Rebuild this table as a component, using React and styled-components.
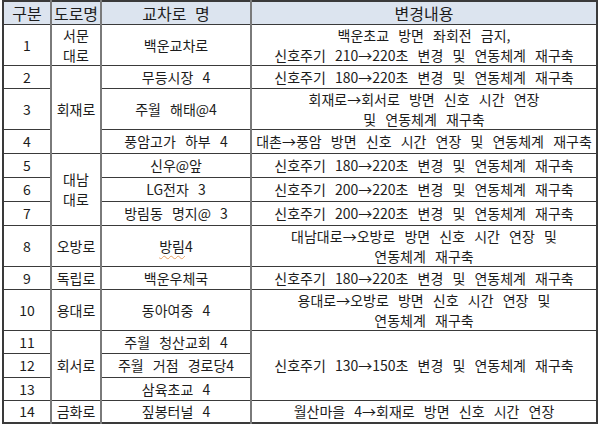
import React from "react";
import styled, { createGlobalStyle } from "styled-components";

const Global = createGlobalStyle`
  html, body { margin: 0; padding: 0; background: #ffffff; }
  body { font-family: "Noto Sans CJK KR", "Noto Sans", sans-serif; color: #1c1c1c; }
`;

const Page = styled.div`
  padding: 0 0 0 2px;
`;

const Table = styled.table`
  width: 596px;
  table-layout: fixed;
  border-collapse: collapse;
  border: 2px solid #3a3a3a;
  font-size: 14px;
  line-height: 20px;
`;

const Head = styled.th`
  background: #dce4ef;
  font-weight: 400;
  font-size: 16px;
  line-height: 20px;
  padding: 0;
  text-align: center;
  border-bottom: 1px solid #3a3a3a;
  border-right: ${(p) => (p.$last ? "2px solid #3a3a3a" : "2px solid #7a7a7a")};
  word-spacing: 5px;
`;

const Row = styled.tr`
  height: ${(p) => p.$h}px;
`;

const Cell = styled.td`
  padding: 0;
  text-align: center;
  vertical-align: middle;
  border-bottom: 1px solid #3a3a3a;
  border-right: ${(p) => (p.$last ? "2px solid #3a3a3a" : "2px solid #7a7a7a")};
  word-spacing: 6px;
  white-space: nowrap;
`;

const Typo = styled.span`
  text-decoration: underline wavy #e8a060;
  text-decoration-thickness: 1px;
  text-underline-offset: 3px;
`;

const rows = [
  { n: "1", h: 38, road: { t: ["서문", "대로"], span: 1 }, x: "백운교차로", c: { t: ["백운초교 방면 좌회전 금지,", "신호주기 210→220초 변경 및 연동체계 재구축"], span: 1 } },
  { n: "2", h: 23, road: { t: ["회재로"], span: 3 }, x: "무등시장 4", c: { t: ["신호주기 180→220초 변경 및 연동체계 재구축"], span: 1 } },
  { n: "3", h: 36, x: "주월 해태@4", c: { t: ["회재로→회서로 방면 신호 시간 연장", "및 연동체계 재구축"], span: 1 } },
  { n: "4", h: 24, x: "풍암고가 하부 4", c: { t: ["대촌→풍암 방면 신호 시간 연장 및 연동체계 재구축"], span: 1 } },
  { n: "5", h: 24, road: { t: ["대남", "대로"], span: 3 }, x: "신우@앞", c: { t: ["신호주기 180→220초 변경 및 연동체계 재구축"], span: 1 } },
  { n: "6", h: 24, x: "LG전자 3", c: { t: ["신호주기 200→220초 변경 및 연동체계 재구축"], span: 1 } },
  { n: "7", h: 24, x: "방림동 명지@ 3", c: { t: ["신호주기 200→220초 변경 및 연동체계 재구축"], span: 1 } },
  { n: "8", h: 37, road: { t: ["오방로"], span: 1 }, x: "방림4", typo: true, c: { t: ["대남대로→오방로 방면 신호 시간 연장 및", "연동체계 재구축"], span: 1 } },
  { n: "9", h: 23, road: { t: ["독립로"], span: 1 }, x: "백운우체국", c: { t: ["신호주기 180→220초 변경 및 연동체계 재구축"], span: 1 } },
  { n: "10", h: 36, road: { t: ["용대로"], span: 1 }, x: "동아여중 4", c: { t: ["용대로→오방로 방면 신호 시간 연장 및", "연동체계 재구축"], span: 1 } },
  { n: "11", h: 23, road: { t: ["회서로"], span: 3 }, x: "주월 청산교회 4", c: { t: ["신호주기 130→150초 변경 및 연동체계 재구축"], span: 3 } },
  { n: "12", h: 24, x: "주월 거점 경로당4" },
  { n: "13", h: 23, x: "삼육초교 4" },
  { n: "14", h: 23, road: { t: ["금화로"], span: 1 }, x: "짚봉터널 4", c: { t: ["월산마을 4→회재로 방면 신호 시간 연장"], span: 1 } },
];

const Lines = ({ t }) =>
  t.map((line, i) => (
    <React.Fragment key={i}>
      {i > 0 && <br />}
      {line}
    </React.Fragment>
  ));

export default function App() {
  return (
    <Page>
      <Global />
      <Table>
        <colgroup>
          <col style={{ width: 48 }} />
          <col style={{ width: 50 }} />
          <col style={{ width: 150 }} />
          <col />
        </colgroup>
        <thead>
          <Row $h={23}>
            <Head>구분</Head>
            <Head>도로명</Head>
            <Head>교차로 명</Head>
            <Head $last>변경내용</Head>
          </Row>
        </thead>
        <tbody>
          {rows.map((r) => (
            <Row key={r.n} $h={r.h}>
              <Cell>{r.n}</Cell>
              {r.road && (
                <Cell rowSpan={r.road.span}>
                  <Lines t={r.road.t} />
                </Cell>
              )}
              <Cell>{r.typo ? <><Typo>방림</Typo>4</> : r.x}</Cell>
              {r.c && (
                <Cell $last rowSpan={r.c.span}>
                  <Lines t={r.c.t} />
                </Cell>
              )}
            </Row>
          ))}
        </tbody>
      </Table>
    </Page>
  );
}
